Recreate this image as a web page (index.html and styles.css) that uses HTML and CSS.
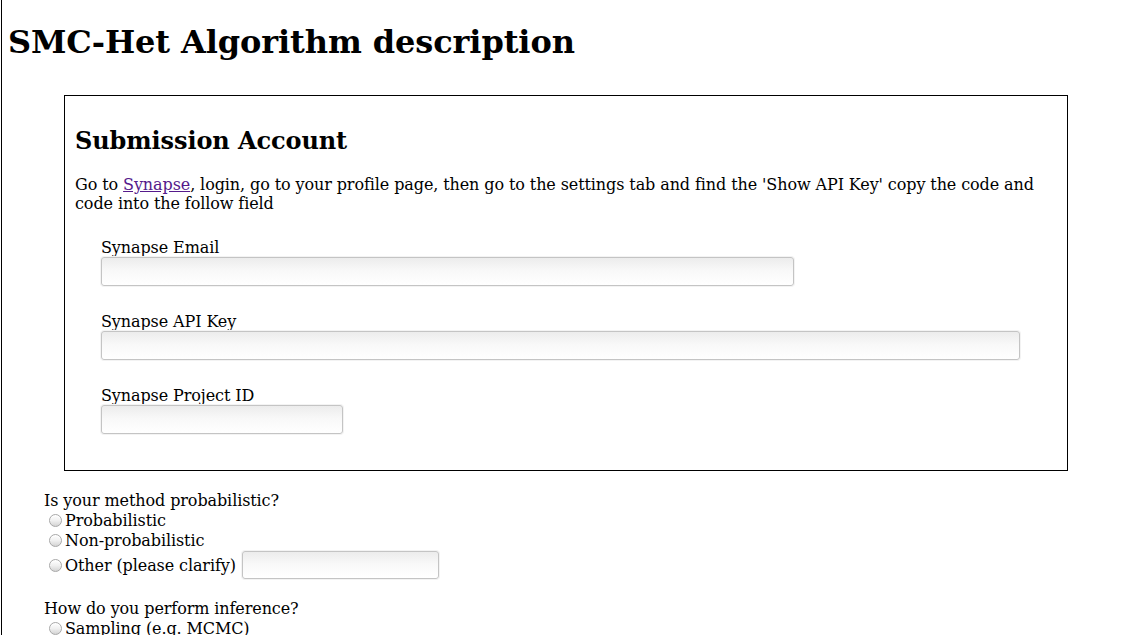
FILE: index.html
```html
<!DOCTYPE html>
<html>
<head>
<meta charset="utf-8">
<title>SMC-Het Algorithm description</title>
<link rel="stylesheet" href="styles.css">
</head>
<body>
<h1 class="title">SMC-Het Algorithm description</h1>
<form class="form">
  <div class="account">
    <h2 class="account-title">Submission Account</h2>
    <p class="account-text">Go to <a class="link" href="#">Synapse</a>, login, go to your profile page, then go to the settings tab and find the 'Show API Key' copy the code and code into the follow field</p>
    <div class="fields">
      <div class="field">
        <label class="field-label">Synapse Email</label>
        <input class="text-input email" type="text">
      </div>
      <div class="field">
        <label class="field-label">Synapse API Key</label>
        <input class="text-input apikey" type="text">
      </div>
      <div class="field">
        <label class="field-label">Synapse Project ID</label>
        <input class="text-input project" type="text">
      </div>
    </div>
  </div>

  <div class="question">
    <div class="question-label">Is your method probabilistic?</div>
    <div class="option"><input class="radio" type="radio" name="prob">Probabilistic</div>
    <div class="option"><input class="radio" type="radio" name="prob">Non-probabilistic</div>
    <div class="option option-other"><input class="radio" type="radio" name="prob">Other (please clarify) <input class="text-input other" type="text"></div>
  </div>

  <div class="question">
    <div class="question-label">How do you perform inference?</div>
    <div class="option"><input class="radio" type="radio" name="inf">Sampling (e.g. MCMC)</div>
    <div class="option"><input class="radio" type="radio" name="inf">Optimization (e.g. EM)</div>
  </div>
</form>
</body>
</html>
```

FILE: styles.css
```css
html {
  margin-left: 1px;
  border-left: 1px solid #000;
  background: #fff;
}

body {
  margin: 8px 8px 8px 6px;
  font-family: "DejaVu Serif", serif;
  font-size: 16px;
  letter-spacing: -0.1px;
  color: #000;
}

.title {
  font-size: 32px;
  font-weight: bold;
  margin: 15.44px 0 21.44px;
}

.form {
  padding-left: 36px;
}

.account {
  margin: 34px 0 20px 20px;
  width: 1004px;
  box-sizing: border-box;
  border: 1px solid #000;
  padding: 10px;
}

.account-title {
  font-size: 24px;
  font-weight: bold;
  margin: 20px 0;
}

.account-text {
  margin: 16px 0 0;
}

.link {
  color: #551a8b;
}

.fields {
  margin: 25px 0 0 26px;
  display: flex;
  flex-direction: column;
}

.field {
  display: flex;
  flex-direction: column;
  align-items: flex-start;
  margin-bottom: 26px;
}

.field-label {
  display: block;
}

.text-input {
  box-sizing: border-box;
  height: 29px;
  margin: 0;
  padding: 0 6px;
  border: 1px solid #c4c4c4;
  border-radius: 3px;
  background: linear-gradient(to bottom, #ececec 0%, #f8f8f8 45%, #ffffff 100%);
  box-shadow: 0 0 0 1px #f3f3f3;
  font-family: "DejaVu Sans", sans-serif;
  font-size: 13px;
}

.email { width: 693px; }
.apikey { width: 919px; }
.project { width: 242px; }

.option-other {
  margin-top: 1px;
}

.other {
  width: 197px;
  height: 28px;
  margin-left: 1px;
  vertical-align: 1px;
}

.question {
  margin-bottom: 20px;
}

.radio {
  appearance: none;
  -webkit-appearance: none;
  width: 13px;
  height: 13px;
  margin: 4px 3px 0 5px;
  border: 1px solid #a8a8a8;
  border-radius: 50%;
  box-sizing: border-box;
  background: linear-gradient(to bottom, #ffffff 0%, #f0f0f0 50%, #d4d4d4 100%);
  box-shadow: inset 0 1px 1px rgba(255, 255, 255, 0.9);
  vertical-align: -1px;
}
```
